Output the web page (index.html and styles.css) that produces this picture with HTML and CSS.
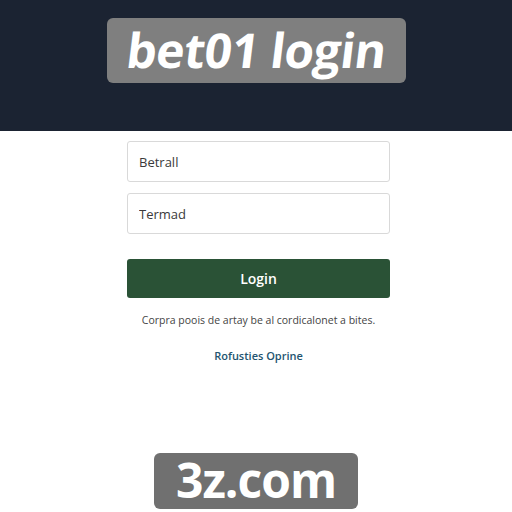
FILE: index.html
```html
<!DOCTYPE html>
<html lang="en">
<head>
    <meta charset="UTF-8">
    <meta name="viewport" content="width=device-width, initial-scale=1.0">
    <title>bet01 login</title>
    <link rel="stylesheet" href="styles.css">
</head>
<body>
    <header class="top-bar"></header>

    <main class="login">
        <form class="login-form">
            <input class="field" type="text" placeholder="Betrall">
            <input class="field" type="password" placeholder="Termad">
            <button class="login-btn" type="button">Login</button>
        </form>
        <p class="note">Corpra poois de artay be al cordicalonet a bites.</p>
        <a class="link" href="#">Rofusties Oprine</a>
    </main>

    <div class="badge badge-top"><span class="slant">bet01 login</span></div>
    <div class="badge badge-bottom">3z.com</div>
</body>
</html>
```

FILE: styles.css
```css
* {
    margin: 0;
    padding: 0;
    box-sizing: border-box;
}

body {
    font-family: "Open Sans", Arial, sans-serif;
    background-color: #ffffff;
    width: 512px;
    height: 512px;
    position: relative;
    overflow: hidden;
}

.top-bar {
    height: 131px;
    background-color: #1b2332;
}

.login {
    display: flex;
    flex-direction: column;
    align-items: center;
    padding-top: 10px;
    padding-left: 5px;
}

.login-form {
    display: flex;
    flex-direction: column;
    gap: 11px;
    width: 263px;
}

.field {
    height: 41px;
    border: 1px solid #d9d9d9;
    border-radius: 3px;
    padding: 0 11px;
    font-family: "Open Sans", Arial, sans-serif;
    font-size: 13px;
    color: #333;
}

.field::placeholder {
    color: #3a3a3a;
}

.login-btn {
    margin-top: 14px;
    height: 39px;
    border: none;
    border-radius: 3px;
    background-color: #2a5236;
    color: #ffffff;
    font-family: "Open Sans", Arial, sans-serif;
    font-size: 14px;
    font-weight: 600;
}

.note {
    margin-top: 15px;
    font-size: 10.5px;
    color: #444;
}

.link {
    margin-top: 21px;
    font-size: 11px;
    font-weight: 600;
    color: #235470;
    text-decoration: none;
}

/* overlay labels */
.badge {
    position: absolute;
    background-color: #7f7f7f;
    color: #ffffff;
    font-family: "Open Sans", Arial, sans-serif;
    font-weight: 700;
    border-radius: 6px;
    display: flex;
    align-items: center;
    justify-content: center;
}

.badge-top {
    left: 107px;
    top: 18px;
    width: 299px;
    height: 65px;
    font-size: 48px;
    letter-spacing: -0.5px;
    padding-bottom: 3px;
}

.slant {
    display: inline-block;
    transform: skewX(-7deg);
}

.badge-bottom {
    left: 154px;
    top: 453px;
    width: 204px;
    height: 56px;
    font-size: 48px;
    letter-spacing: -1px;
    background-color: #707070;
    padding-bottom: 3px;
}
```
